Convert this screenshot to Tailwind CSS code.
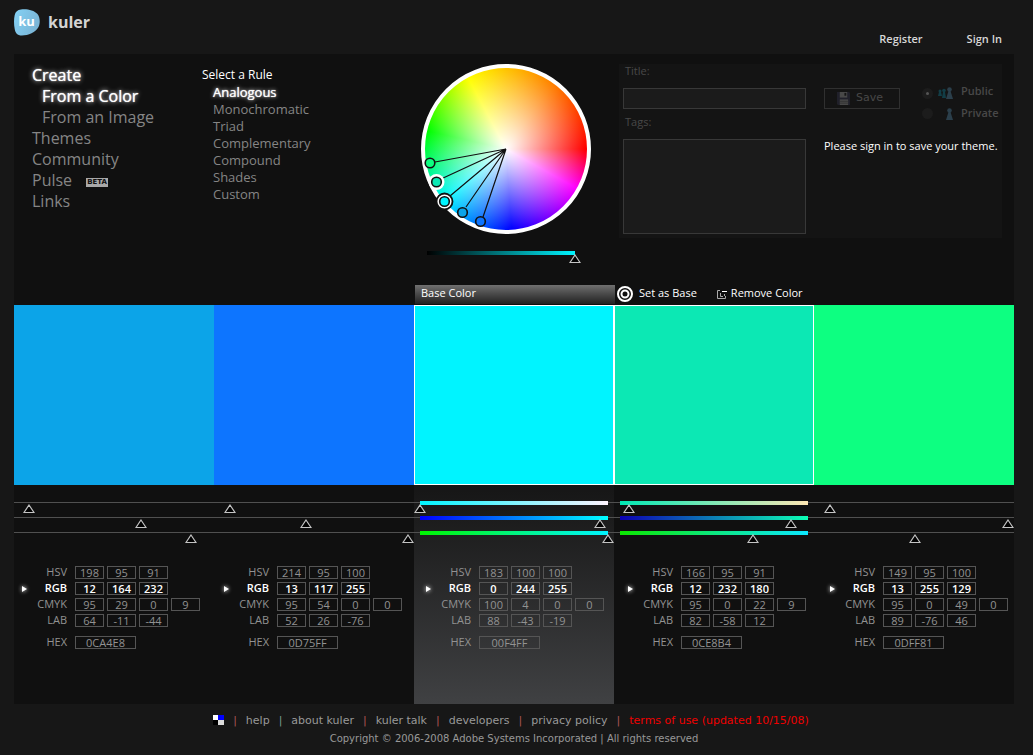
<!DOCTYPE html>
<html lang="en">
<head>
    <meta charset="UTF-8">
    <meta name="viewport" content="width=device-width, initial-scale=1.0">
    <title>kuler</title>
    <script src="https://cdn.jsdelivr.net/npm/@tailwindcss/browser@4"></script>
</head>
<body class="bg-[#171717] min-h-screen pl-[14px] pr-[19px] font-['Open_Sans','Noto_Sans',sans-serif] text-[#858585]">
    <!-- Header -->
    <header class="flex justify-between h-[54px] pr-3">
        <a href="#" class="flex items-center gap-2 h-11">
            <svg class="w-[26px] h-[27px]" viewBox="0 0 26 27">
                <defs>
                    <linearGradient id="logo" x1="0" y1="0" x2="1" y2="0.4">
                        <stop offset="0" stop-color="#84d2f6"></stop>
                        <stop offset="1" stop-color="#7ab5d6"></stop>
                    </linearGradient>
                </defs>
                <path d="M7 0.5C12 -0.5 20 1 23.500 5C26 8 26.500 14 24.500 18C22 23 14 26.500 8 26.500C3 26.500 1.500 24 0.700 20C-0.200 15 -0.200 10 0.700 6C1.500 2.500 3.500 1 7 0.500Z" fill="url(#logo)"></path>
                <text x="12.500" y="17" text-anchor="middle" font-size="13" font-weight="700" fill="#fff">ku</text>
            </svg>
            <span class="text-base font-bold text-[#d4d4d4]">kuler</span>
        </a>
        <div class="flex items-end gap-11 pb-1.5 text-[11px] leading-[18px] font-semibold text-[#d8d8d8]">
            <a href="#">Register</a>
            <a href="#">Sign In</a>
        </div>
    </header>

    <main class="bg-[#101010]">
        <div class="flex h-[231px] pt-2.5">
            <!-- Menu -->
            <nav class="w-[188px] pt-px pl-[18px] text-base leading-[21px]">
                <ul>
                    <li><a href="#" class="text-white [text-shadow:0_0_1px_#fff,0_0_5px_#fff]">Create</a></li>
                    <li class="pl-2.5"><a href="#" class="text-white [text-shadow:0_0_1px_#fff,0_0_5px_#fff]">From a Color</a></li>
                    <li class="pl-2.5"><a href="#">From an Image</a></li>
                    <li><a href="#">Themes</a></li>
                    <li><a href="#">Community</a></li>
                    <li class="flex items-center gap-3.5"><a href="#">Pulse</a><span class="w-[22px] h-[9px] mt-1 bg-[#a8a8a8] text-center text-[7px] leading-[9px] font-bold font-['DejaVu_Sans',sans-serif] text-[#101010]">BETA</span></li>
                    <li><a href="#">Links</a></li>
                </ul>
            </nav>

            <!-- Rules -->
            <section class="w-[219px] pt-0.5 text-[13px] leading-[17px]">
                <h2 class="text-xs leading-[18px] text-white">Select a Rule</h2>
                <ul class="pl-[11px]">
                    <li><a href="#" class="text-white [text-shadow:0_0_1px_#fff,0_0_4px_#fff]">Analogous</a></li>
                    <li><a href="#">Monochromatic</a></li>
                    <li><a href="#">Triad</a></li>
                    <li><a href="#">Complementary</a></li>
                    <li><a href="#">Compound</a></li>
                    <li><a href="#">Shades</a></li>
                    <li><a href="#">Custom</a></li>
                </ul>
            </section>

            <!-- Color wheel -->
            <section class="w-[170px]">
                <div class="relative size-[170px] rounded-full border-4 border-white bg-origin-border bg-[radial-gradient(circle_closest-side,#fff_0%,#fff0_94%),conic-gradient(from_90deg,#f00_0deg,#f0f_29deg,#00f_86deg,#00f4ff_140deg,#0f0_193deg,#ff0_242deg,#ffc400_270deg,#ff8000_306deg,#f00_360deg)]">
                    <svg class="absolute -top-1 -left-1 w-[170px] h-[170px] overflow-visible" viewBox="0 0 170 170" stroke="#111" fill="none">
                        <path stroke-width="1.200" d="M85 85L14 98M85 85L20 115M85 85L29 132M85 85L45 143M85 85L62 153"></path>
                        <circle cx="9" cy="99" r="4.800" fill="#0dff81" stroke-width="1.600"></circle>
                        <circle cx="15.500" cy="118" r="8" fill="#fff" stroke="none"></circle>
                        <circle cx="15.500" cy="118" r="4.800" fill="#0ce8b4" stroke-width="1.600"></circle>
                        <circle cx="23.500" cy="137.500" r="8" fill="#fff" stroke-width="1.800"></circle>
                        <circle cx="23.500" cy="137.500" r="4.800" fill="#00f4ff" stroke-width="1.600"></circle>
                        <circle cx="41.500" cy="148.500" r="4.800" fill="#0ca4e8" stroke-width="1.600"></circle>
                        <circle cx="59.500" cy="157.500" r="4.800" fill="#0d75ff" stroke-width="1.600"></circle>
                    </svg>
                </div>
                <div class="relative mt-[17px] h-[15px] w-40">
                    <span class="absolute top-0 inset-x-1.5 h-1 bg-[linear-gradient(to_right,#000,#00f4ff)]"></span>
                    <input type="range" min="0" max="100" value="100" aria-label="Brightness" class="relative block w-full h-[15px] appearance-none bg-transparent [&::-webkit-slider-thumb]:appearance-none [&::-webkit-slider-thumb]:w-3 [&::-webkit-slider-thumb]:h-[9px] [&::-webkit-slider-thumb]:bg-[url('data:image/svg+xml,%3Csvg%20xmlns=%22http://www.w3.org/2000/svg%22%20viewBox=%220%200%2012%209%22%3E%3Cpath%20d=%22M6%201L11%208.5H1Z%22%20stroke=%22%23c4c4c4%22%20stroke-width=%221.2%22/%3E%3C/svg%3E')]">
                </div>
            </section>

            <!-- Save form -->
            <form class="flex w-[383px] h-[174px] ml-auto mr-3 pl-1 bg-[#141414] text-[11px] text-[#484848]">
                <div class="w-[183px]">
                    <label for="title" class="block h-6 pl-0.5 leading-[14px]">Title:</label>
                    <input id="title" type="text" disabled class="block w-full h-[21px] border border-[#383838] bg-[#1b1b1b]">
                    <label for="tags" class="block h-[30px] pt-1.5 pl-0.5 leading-[14px]">Tags:</label>
                    <textarea id="tags" disabled class="block w-full h-[95px] resize-none border border-[#383838] bg-[#1b1b1b]"></textarea>
                </div>
                <div class="flex-1 pl-[18px] pt-4">
                    <div class="flex h-[57px]">
                        <button type="button" disabled class="flex items-center gap-1.5 w-[76px] h-[21px] mt-2 pl-3 border border-[#303030] font-['DejaVu_Sans',sans-serif] text-[11px]">
                            <svg class="size-[13px]" viewBox="0 0 14 14">
                                <path d="M0 0H13L14 1V14H1L0 13Z" fill="#20202a"></path>
                                <path d="M3 0H11V6H3Z" fill="#484848"></path>
                                <path d="M8 1H10V4H8Z" fill="#151515"></path>
                                <path d="M3 8H12V14H3Z" fill="#484848"></path>
                                <path d="M3 10H12M3 12H12" stroke="#333"></path>
                            </svg>
                            Save
                        </button>
                        <div class="ml-[22px] font-semibold leading-[22px]">
                            <label class="flex items-center">
                                <input type="radio" name="visibility" checked disabled class="size-[11px] mt-1 appearance-none rounded-full border-4 border-[#1c1c1c] bg-[#555]">
                                <svg class="w-4 h-3 mt-1 ml-1" viewBox="0 0 16 12">
                                    <g fill="#123d46">
                                        <circle cx="3" cy="4" r="1.500"></circle><path d="M2 5H4L5 9H1Z"></path>
                                        <circle cx="7" cy="3.500" r="1.800"></circle><path d="M6 5H8L9 11H5Z"></path>
                                    </g>
                                    <g fill="#2b3f4b"><circle cx="12.500" cy="2.500" r="2.300"></circle><path d="M11.500 4H13.500L16 12H9Z"></path></g>
                                </svg>
                                <span class="ml-2">Public</span>
                            </label>
                            <label class="flex items-center">
                                <input type="radio" name="visibility" disabled class="size-[11px] appearance-none rounded-full bg-[#1c1c1c]">
                                <svg class="w-4 h-3 mt-0.5 ml-1" viewBox="0 0 16 12">
                                    <g fill="#2b3f4b"><circle cx="12.500" cy="2.500" r="2.300"></circle><path d="M11.500 4H13.500L16 12H9Z"></path></g>
                                </svg>
                                <span class="ml-2">Private</span>
                            </label>
                        </div>
                    </div>
                    <p class="leading-[18px] whitespace-nowrap text-white">Please sign in to save your theme.</p>
                </div>
            </form>
        </div>

        <!-- Swatch toolbar -->
        <div class="grid grid-cols-5 h-5 text-[11px] leading-4 text-white">
            <div class="col-start-3 h-[19px] ml-px -mr-px pl-1.5 bg-linear-to-b from-[#707070] to-[#222]">Base Color</div>
            <div class="flex items-start pl-[3px] whitespace-nowrap">
                <button type="button" class="flex gap-1.5">
                    <svg class="size-4 mt-px" viewBox="0 0 16 16" fill="none" stroke="#fff">
                        <circle cx="8" cy="8" r="7" stroke-width="2"></circle>
                        <circle cx="8" cy="8" r="3.500" stroke-width="2"></circle>
                    </svg>
                    Set as Base
                </button>
                <button type="button" class="flex gap-1 ml-5">
                    <svg class="w-2.5 h-[9px] mt-[5px]" viewBox="0 0 10 9" fill="none" stroke="#aaa">
                        <path d="M3 0.500H0.500V8.500H8.500V6"></path>
                        <path d="M5 1.500H10" stroke="#fff"></path>
                        <path d="M3.500 3V6.500H6M7.500 4V6"></path>
                    </svg>
                    Remove Color
                </button>
            </div>
        </div>

        <div id="swatches" class="grid grid-cols-5 h-[180px]"></div>

        <!-- Sliders and values, over the highlight of the base color -->
        <div class="grid grid-cols-5 grid-rows-[16px_65px_138px]">
            <div class="col-start-3 row-start-1 row-span-3 bg-linear-to-b from-[#161616] to-[#404143]"></div>
            <div id="sliders" class="col-start-1 col-span-5 row-start-2 grid grid-cols-5 items-start"></div>
            <div id="values" class="col-start-1 col-span-5 row-start-3 grid grid-cols-[repeat(5,20.2%)] text-[11px] text-[#929292]"></div>
        </div>
    </main>

    <!-- Footer -->
    <footer class="pt-2 font-['DejaVu_Sans',Verdana,sans-serif] text-[#999]">
        <div class="flex justify-center items-center gap-[9px] h-[18px] pr-1.5 text-[11px] whitespace-nowrap">
            <svg class="w-[11px] h-2.5 -mt-0.5" viewBox="0 0 11 10" shape-rendering="crispEdges">
                <path d="M0 0H5V5H0Z" fill="#fff"></path>
                <path d="M5 0H11V5H5Z" fill="#00f"></path>
                <path d="M0 5H5V10H0Z" fill="#000"></path>
                <path d="M5 5H11V10H5Z" fill="#ddd"></path>
            </svg>
            <span class="text-[#a55]">|</span>
            <a href="#">help</a>
            <span class="text-[#7a9a90]">|</span>
            <a href="#">about kuler</a>
            <span class="text-[#a55]">|</span>
            <a href="#">kuler talk</a>
            <span class="text-[#a55]">|</span>
            <a href="#">developers</a>
            <span class="text-[#a55]">|</span>
            <a href="#">privacy policy</a>
            <span class="text-[#a55]">|</span>
            <a href="#" class="text-[#f00000]">terms of use (updated 10/15/08)</a>
        </div>
        <p class="text-center text-[10px] leading-[18px]">Copyright © 2006-2008 Adobe Systems Incorporated | All rights reserved</p>
    </footer>

    <script>
        const colors = [
            { hex: '0CA4E8', hsv: [198, 95, 91], rgb: [12, 164, 232], cmyk: [95, 29, 0, 9], lab: [64, -11, -44] },
            { hex: '0D75FF', hsv: [214, 95, 100], rgb: [13, 117, 255], cmyk: [95, 54, 0, 0], lab: [52, 26, -76] },
            { hex: '00F4FF', hsv: [183, 100, 100], rgb: [0, 244, 255], cmyk: [100, 4, 0, 0], lab: [88, -43, -19], active: true,
              bars: ['#00f4ff, #fff4ff', '#0000ff, #00ffff', '#00f400, #00f4ff'] },
            { hex: '0CE8B4', hsv: [166, 95, 91], rgb: [12, 232, 180], cmyk: [95, 0, 22, 9], lab: [82, -58, 12], active: true,
              bars: ['#00e8b4, #ffe8b4', '#0c00b4, #0cffb4', '#0ce800, #0ce8ff'] },
            { hex: '0DFF81', hsv: [149, 95, 100], rgb: [13, 255, 129], cmyk: [95, 0, 49, 0], lab: [89, -76, 46] }
        ];

        document.getElementById('swatches').innerHTML = colors.map(c =>
            `<div class="${c.active ? 'border border-white' : ''}" style="background-color: #${c.hex}"></div>`
        ).join('');

        // One slider per RGB channel
        document.getElementById('sliders').innerHTML = colors.map(c => `
            <div>${c.rgb.map((v, i) => `
                <div class="relative h-[15px]">
                    <span class="absolute top-px inset-x-0 h-px bg-[#505050]"></span>
                    ${c.bars ? `<span class="absolute top-0 inset-x-1.5 h-1" style="background-image: linear-gradient(to right, ${c.bars[i]})"></span>` : ''}
                    <input type="range" min="0" max="255" value="${v}" aria-label="${'RGB'[i]} of #${c.hex}" class="relative block w-full h-[15px] appearance-none bg-transparent [&::-webkit-slider-thumb]:appearance-none [&::-webkit-slider-thumb]:w-3 [&::-webkit-slider-thumb]:h-[9px] [&::-webkit-slider-thumb]:bg-[url('data:image/svg+xml,%3Csvg%20xmlns=%22http://www.w3.org/2000/svg%22%20viewBox=%220%200%2012%209%22%3E%3Cpath%20d=%22M6%201L11%208.5H1Z%22%20stroke=%22%23c4c4c4%22%20stroke-width=%221.2%22/%3E%3C/svg%3E')]">
                </div>`).join('')}
            </div>`).join('');

        const row = (c, name, values) => `
            <div class="flex items-center h-[13px] ${name === 'RGB' ? 'font-semibold text-white' : ''}">
                <span class="w-[14px] pl-[7px]">${name === 'RGB' ? `
                    <svg class="w-2 h-2 overflow-visible drop-shadow-[0_0_2px_#fff]" viewBox="0 0 8 8"><path d="M1 1L6 4L1 7Z" fill="#fff"></path></svg>` : ''}</span>
                <span class="w-[39px] mr-2 text-right">${name}</span>
                <span class="flex gap-[3px]">${values.map(v => `
                    <input type="text" value="${v}" aria-label="${name}" class="${name === 'HEX' ? 'w-[61px]' : 'w-[29px]'} h-[13px] border border-[#555] pb-px text-center leading-[10px]">`).join('')}
                </span>
            </div>`;

        document.getElementById('values').innerHTML = colors.map(c => `
            <div class="space-y-[3px]">
                ${row(c, 'HSV', c.hsv)}${row(c, 'RGB', c.rgb)}${row(c, 'CMYK', c.cmyk)}${row(c, 'LAB', c.lab)}
                <div class="pt-1.5">${row(c, 'HEX', [c.hex])}</div>
            </div>`).join('');
    </script>
</body>
</html>
